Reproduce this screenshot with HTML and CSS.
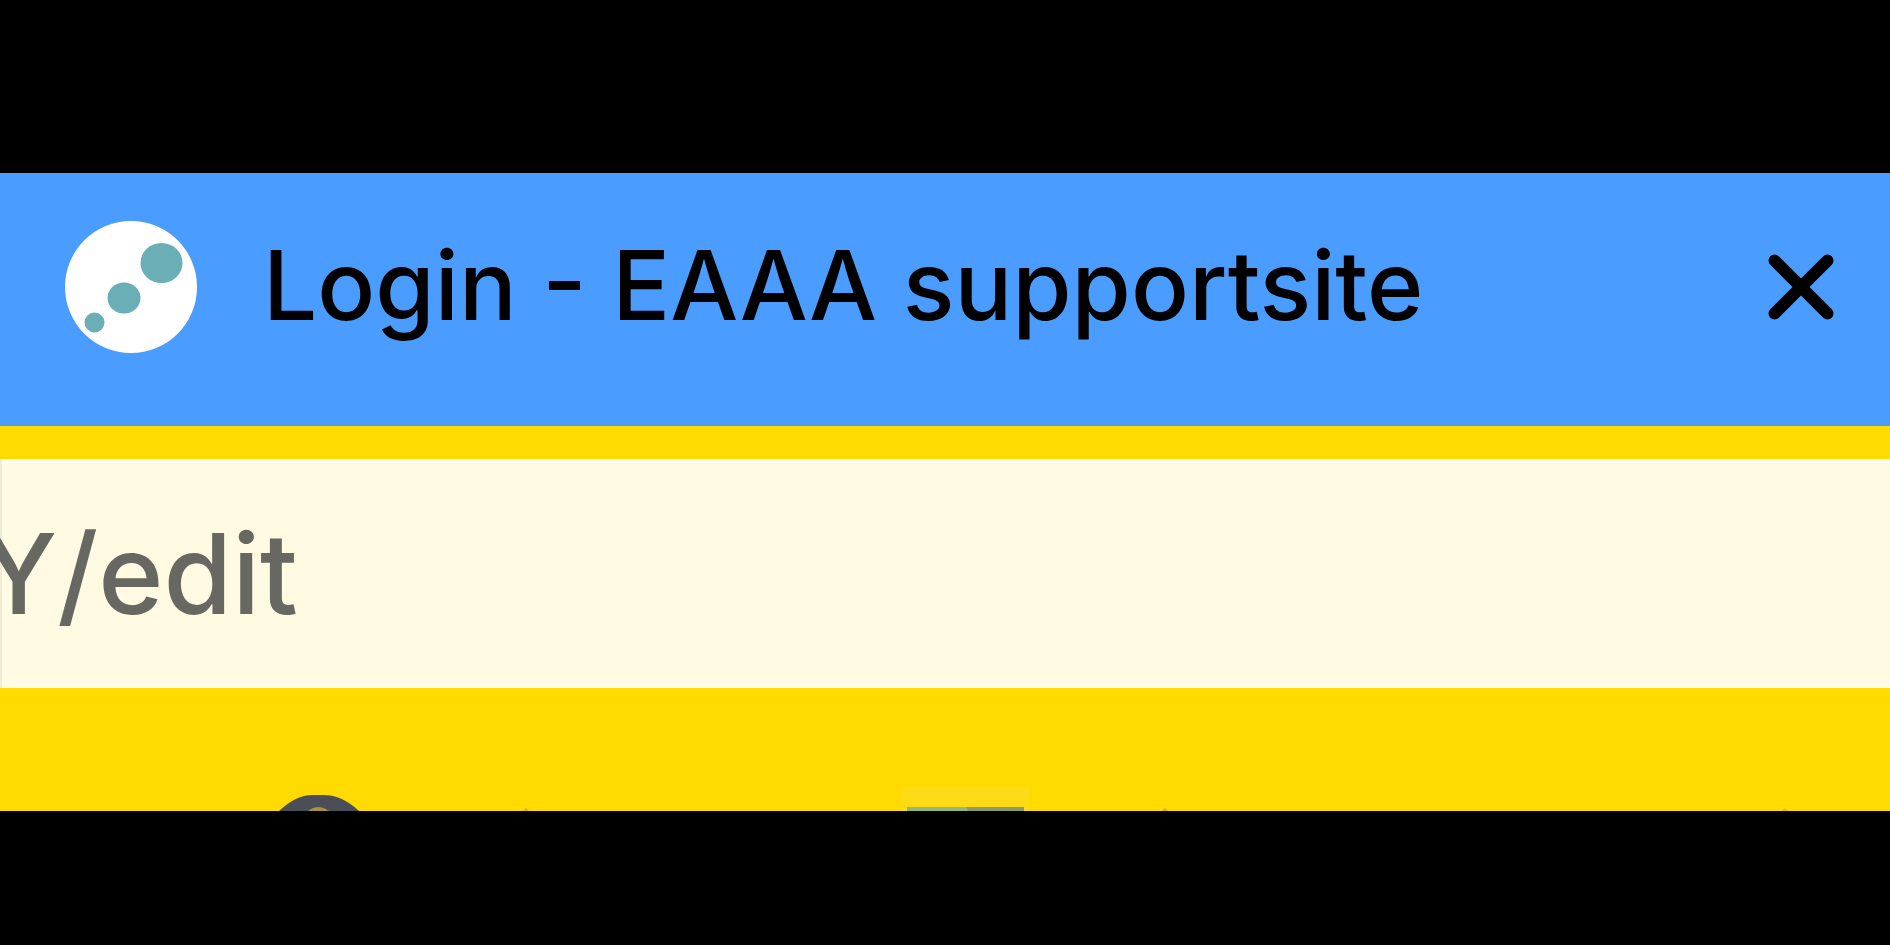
FILE: index.html
```html
<!DOCTYPE html>
<html lang="en">
<head>
<meta charset="utf-8">
<title>Login - EAAA supportsite</title>
<link rel="stylesheet" href="styles.css">
</head>
<body>
<main class="browser">
  <header class="tab">
    <svg class="tab-icon" viewBox="0 0 132 132" aria-hidden="true">
      <circle cx="66" cy="66" r="66" fill="#fff"/>
      <g fill="#6aaeb6">
        <ellipse cx="96.500" cy="42" rx="21" ry="20"/>
        <ellipse cx="59" cy="77" rx="16.500" ry="15.500"/>
        <circle cx="29.500" cy="101.500" r="10"/>
      </g>
    </svg>
    <h1 class="tab-title">Login - EAAA supportsite</h1>
    <button class="tab-close" type="button" aria-label="Close tab">
      <svg class="close-icon" viewBox="0 0 66 66" aria-hidden="true">
        <path d="M6.500 6.500 59.500 59.500M59.500 6.500 6.500 59.500" fill="none" stroke="#000" stroke-width="12" stroke-linecap="round"/>
      </svg>
    </button>
  </header>
  <div class="address">
    <input class="address-input" type="text" value="Y/edit" aria-label="Address" spellcheck="false">
  </div>
  <nav class="bookmarks" aria-label="Bookmarks">
    <svg class="globe" viewBox="0 0 92 17" aria-hidden="true">
      <path d="M4 17Q21 1 37 1H49Q67 1 84 17Z" fill="#4c4e57"/>
      <path d="M33 17Q43 9 54 17Z" fill="#a69337"/>
    </svg>
    <svg class="mark" viewBox="0 0 6 3" aria-hidden="true"><path d="M0 3 3 0 6 3Z" fill="#d2b600"/></svg>
    <svg class="page" viewBox="0 0 128 24" aria-hidden="true">
      <path d="M0 0H128V24H0Z" fill="#ffda16"/>
      <path d="M6 20H66V24H6Z" fill="#92b778"/>
      <path d="M66 20H123V24H66Z" fill="#8d9b69"/>
    </svg>
    <svg class="mark" viewBox="0 0 6 3" aria-hidden="true"><path d="M0 3 3 0 6 3Z" fill="#d2b600"/></svg>
    <svg class="mark" viewBox="0 0 6 3" aria-hidden="true"><path d="M0 3 3 0 6 3Z" fill="#e0c200"/></svg>
  </nav>
</main>
</body>
</html>
```
FILE: styles.css
```css
* {
  box-sizing: border-box;
}

body {
  margin: 0;
  background: #000;
  font-family: Inter, "Liberation Sans", sans-serif;
  font-weight: 500;
}

.browser {
  padding: 173px 0 134px;
  overflow: hidden;
}

.tab {
  display: flex;
  align-items: center;
  padding: 48px 56px 73px 65px;
  background: #4a9cff;
}

.tab-icon {
  flex: none;
  width: 132px;
  height: 132px;
}

.tab-title {
  flex: 1;
  margin: 0 0 0 66px;
  padding-bottom: 4px;
  font-size: 96px;
  font-weight: inherit;
  line-height: 128px;
  white-space: nowrap;
  color: #000;
}

.tab-close {
  flex: none;
  display: flex;
  padding: 0;
  border: 0;
  background: none;
}

.close-icon {
  width: 66px;
  height: 66px;
}

.address {
  border-top: 33px solid #ffdb00;
  background: #fffae1;
  box-shadow: inset 2px 0 #f0ebd4, inset 0 4px #fffcef, inset 0 -4px #fffcef;
  overflow: hidden;
}

.address-input {
  display: block;
  width: 100%;
  height: 229px;
  margin-left: -20px;
  padding: 48px 0 49px;
  border: 0;
  outline: 0;
  background: none;
  font-family: inherit;
  font-size: 111px;
  font-weight: inherit;
  line-height: 132px;
  color: #686862;
}

.bookmarks {
  display: flex;
  align-items: flex-end;
  padding: 99px 102px 0 275px;
  background: #ffdb00;
}

.globe {
  width: 92px;
  height: 17px;
}

.page {
  width: 128px;
  height: 24px;
  margin: 0 133px 0 372px;
}

.mark {
  width: 6px;
  height: 3px;
}

.globe + .mark {
  margin-left: 156px;
}

.mark + .mark {
  margin-left: auto;
}
```
